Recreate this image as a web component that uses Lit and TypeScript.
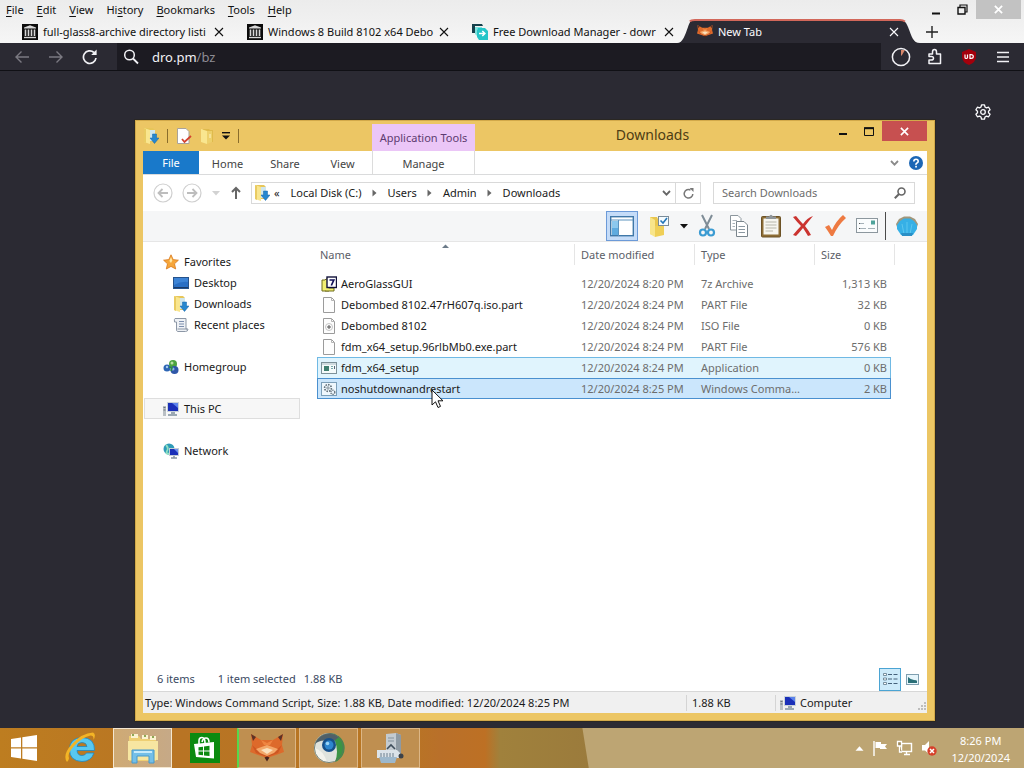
import { LitElement, html, svg, css, nothing, TemplateResult } from "lit";
import { customElement } from "lit/decorators.js";
import { classMap } from "lit/directives/class-map.js";

const base = css`
  * {
    box-sizing: border-box;
  }
  :host {
    font-family: "Noto Sans", "Open Sans", sans-serif;
    font-size: 11px;
    line-height: 16px;
  }
  button,
  input {
    font: inherit;
    color: inherit;
    background: none;
    border: 0;
    margin: 0;
    padding: 0;
  }
  button {
    display: flex;
    align-items: center;
    white-space: nowrap;
  }
  a {
    color: inherit;
    text-decoration: none;
  }
  svg {
    display: block;
    flex: none;
  }
`;

/** Wraps vector content in a square or rectangular icon. */
const icon = (w: number, h: number, box: string, body: TemplateResult) =>
  html`<svg width=${w} height=${h} viewBox=${box} aria-hidden="true">${body}</svg>`;

const cross = (size: number, width = 1) =>
  icon(size, size, "0 0 10 10", svg`<path d="M1 1L9 9M9 1L1 9" stroke="currentColor" stroke-width=${width} fill="none"/>`);

const archiveIcon = () =>
  icon(16, 16, "0 0 16 16", svg`
    <rect width="16" height="16" fill="#0c0c0c"/>
    <path d="M2 3.6L8 1.2L14 3.6V4.6H2Z" fill="#d8d8d8"/>
    <path d="M3.5 5.5V12M6.5 5.5V12M9.5 5.5V12M12.5 5.5V12" stroke="#d8d8d8" stroke-width="1.6"/>
    <path d="M2 13.5H14" stroke="#d8d8d8" stroke-width="1.4"/>`);

const fdmIcon = () =>
  icon(16, 16, "0 0 16 16", svg`
    <path d="M0 9V0H10L11 2H3V9Z" fill="#16414c"/>
    <path d="M3 3H10V5H5V12L3 10Z" fill="#7fe3df"/>
    <path d="M6 4H13L16 7V16H7L5 13V6Z" fill="#25c5c8"/>
    <path d="M7 9.500H12.500M10.300 7L12.900 9.500L10.300 12" stroke="#fff" stroke-width="1.500" fill="none"/>`);

const foxIcon = (w: number, h: number) =>
  icon(w, h, "0 0 34 28", svg`
    <path d="M1 0L11 6L23 6L33 0L32 11L34 18L26 21L17 24L8 21L0 18L2 11Z" fill="#dd6a2b"/>
    <path d="M1 0L6 3L3 7ZM33 0L28 3L31 7Z" fill="#5d3226"/>
    <path d="M11 6L17 9L23 6L20 11H14Z" fill="#ef8440"/>
    <path d="M2 11L9 17L17 13L25 17L32 11L28 19L17 23L6 19Z" fill="#cd5722"/>
    <path d="M6 15L17 11L28 15L24 19L17 22L10 19Z" fill="#f3a768"/>
    <path d="M11 16L17 14L23 16L17 20Z" fill="#fbe0bd"/>
    <path d="M14.500 23.500L17 22.500L19.500 23.500L17 27.500Z" fill="#4a231c"/>`);

const folderDown = () =>
  icon(16, 16, "0 0 16 16", svg`
    <path d="M2 0H10L12 2V14H2Z" fill="#e7c65a"/>
    <path d="M7 2H12V13H7Z" fill="#cfe6ee"/>
    <path d="M1 0L7 2V16L1 14Z" fill="#f9e68f"/>
    <path d="M1 0L3 1V15L1 14Z" fill="#e9cb62"/>
    <path d="M9.500 6H13.500V10H16L11.500 15.500L7 10H9.500Z" fill="#2787cf" stroke="#1465a9" stroke-width=".5"/>`);

const folderPlain = () =>
  icon(14, 16, "0 0 14 16", svg`
    <path d="M3 1H9L10 2H13V14H3Z" fill="#dfba4c"/>
    <path d="M1 1L7 3V16L1 14Z" fill="#f9e68f"/>
    <path d="M7 3H12V14L7 16Z" fill="#edd06b"/>
    <path d="M10 6V10" stroke="#fff4c4"/>`);

const pcIcon = () =>
  icon(16, 16, "0 0 16 16", svg`
    <path d="M0 5H3V15H0Z" fill="#b9bfc4"/>
    <path d="M.5 6.500H2.500M.5 9H2.500" stroke="#6c747a"/>
    <path d="M4 1H16V11H4Z" fill="#c9d2da"/>
    <path d="M5 2H15V10H5Z" fill="#1a2fb8"/>
    <path d="M9 2H15V7Z" fill="#5c83ec"/>
    <path d="M8 11H12V13H14V15H5V13H8Z" fill="#9ba8b3"/>`);

const chevronDown = (color: string) =>
  icon(9, 6, "0 0 9 6", svg`<path d="M1 1L4.5 4.6L8 1" stroke=${color} stroke-width="1.8" fill="none"/>`);

const arrowCircle = (flip: boolean) =>
  icon(20, 20, "0 0 20 20", svg`
    <circle cx="10" cy="10" r="9" fill="none" stroke="#cfcfcf" stroke-width="1.2"/>
    <path d=${flip ? "M5 10H14M10.5 6L14.5 10L10.5 14" : "M15 10H6M9.5 6L5.5 10L9.5 14"}
      stroke="#bdbdbd" stroke-width="1.8" fill="none"/>`);

@customElement("browser-chrome")
export class BrowserChrome extends LitElement {
  static styles = [
    base,
    css`
      :host {
        display: block;
        color: #111;
        background: linear-gradient(#ececec, #f0f0f0 20px, #f6f6f6 43px);
      }
      .menubar {
        display: flex;
        height: 20px;
      }
      .menubar button {
        padding: 0 7px 0 6px;
      }
      .menubar u {
        text-underline-offset: 2px;
      }
      .controls {
        display: flex;
        margin-left: auto;
        align-items: flex-start;
      }
      .controls button {
        justify-content: center;
        width: 26px;
        height: 19px;
        padding: 0;
      }
      .controls .close {
        width: 45px;
        margin: 0 3px 0 1px;
        background: #c2c2c2;
        color: #fff;
      }
      .tabs {
        display: flex;
        height: 23px;
      }
      .tab {
        position: relative;
        flex: 0 1 225px;
        min-width: 0;
        display: flex;
        align-items: center;
        padding-left: 22px;
      }
      .tab .label {
        flex: 1;
        padding-left: 5px;
        overflow: hidden;
        white-space: nowrap;
      }
      .tab > * {
        position: relative;
      }
      .tab .shape {
        position: absolute;
        left: 2px;
        bottom: 0;
        width: calc(100% + 18px);
        height: 24px;
      }
      .active {
        color: #fbfbfe;
      }
      .tab .x {
        width: 12px;
        justify-content: center;
      }
      .plus {
        width: 64px;
        justify-content: center;
      }
      .toolbar {
        display: flex;
        align-items: stretch;
        height: 28px;
        background: #2b2a33;
        color: #f2f2f6;
        border-bottom: 1px solid #101015;
      }
      .toolbar button {
        width: 34px;
        justify-content: center;
      }
      .toolbar .first {
        margin-left: 5px;
      }
      .toolbar .dim {
        color: #7b7a82;
      }
      .urlbar {
        flex: 1;
        min-width: 0;
        margin: 0 3px 0 10px;
        padding-left: 6px;
        display: flex;
        align-items: center;
        gap: 13px;
        background: #1c1b22;
        font-size: 13px;
      }
      .urlbar .path {
        color: #8d8c94;
      }
      .end {
        margin-right: 4px;
      }
    `,
  ];

  private menu = ["File", "Edit", "View", "Hi|story", "Bookmarks", "Tools", "Help"];

  private tabs = [
    { icon: archiveIcon(), label: "full-glass8-archive directory listi" },
    { icon: archiveIcon(), label: "Windows 8 Build 8102 x64 Debo" },
    { icon: fdmIcon(), label: "Free Download Manager - dowr" },
    { icon: foxIcon(16, 15), label: "New Tab", active: true },
  ];

  private menuLabel(text: string) {
    const at = Math.max(text.indexOf("|"), 0);
    const plain = text.replace("|", "");
    return html`<span>${plain.slice(0, at)}<u>${plain[at]}</u>${plain.slice(at + 1)}</span>`;
  }

  render() {
    return html`
      <div class="menubar">
        ${this.menu.map((m) => html`<button>${this.menuLabel(m)}</button>`)}
        <div class="controls">
          <button aria-label="Minimize">
            ${icon(10, 12, "0 0 10 12", svg`<path d="M1 9.5H9" stroke="#111" stroke-width="2"/>`)}
          </button>
          <button aria-label="Restore">
            ${icon(11, 11, "0 0 11 11", svg`
              <path d="M1 3.5H8V10H1Z" fill="none" stroke="#111" stroke-width="1.4"/>
              <path d="M3 3V1H10V8H8" fill="none" stroke="#111" stroke-width="1.2"/>`)}
          </button>
          <button class="close" aria-label="Close">${cross(9, 2)}</button>
        </div>
      </div>
      <div class="tabs" role="tablist">
        ${this.tabs.map(
          (t) => html`
            <div class=${classMap({ tab: true, active: !!t.active })} role="tab">
              ${t.active
                ? html`<svg class="shape" viewBox="0 0 243 24" preserveAspectRatio="none" aria-hidden="true">
                    <path d="M0 24C6 24 8 16 11 8C13 2 14 1 18 1H223C227 1 229 3 231 8C235 18 236 24 243 24Z" fill="#2b2a33" />
                    <path d="M13 2.5Q14 1 18 1H223Q226 1 228 2.5" stroke="#d2675a" stroke-width="2" fill="none" />
                  </svg>`
                : nothing}
              ${t.icon}<span class="label">${t.label}</span>
              <button class="x" aria-label="Close tab">${cross(10, 1.1)}</button>
            </div>
          `
        )}
        <button class="plus" aria-label="New tab">
          ${icon(12, 12, "0 0 12 12", svg`<path d="M6 0V12M0 6H12" stroke="#222" stroke-width="1.4"/>`)}
        </button>
      </div>
      <div class="toolbar">
        <button class="first dim" aria-label="Back">
          ${icon(16, 14, "0 0 16 14", svg`<path d="M15 7H2M7.5 1.5L2 7L7.5 12.5" stroke="currentColor" stroke-width="1.4" fill="none"/>`)}
        </button>
        <button class="dim" aria-label="Forward">
          ${icon(16, 14, "0 0 16 14", svg`<path d="M1 7H14M8.5 1.5L14 7L8.5 12.5" stroke="currentColor" stroke-width="1.4" fill="none"/>`)}
        </button>
        <button aria-label="Reload">
          ${icon(16, 16, "0 0 16 16", svg`
            <path d="M14 9A6.3 6.3 0 1 1 12 3.5" stroke="currentColor" stroke-width="1.7" fill="none"/>
            <path d="M14.6 0.6V6H9.2Z" fill="currentColor"/>`)}
        </button>
        <div class="urlbar">
          ${icon(16, 16, "0 0 16 16", svg`
            <circle cx="6.5" cy="6" r="4.8" stroke="currentColor" stroke-width="1.5" fill="none"/>
            <path d="M10 9.5L15 14.5" stroke="currentColor" stroke-width="1.8"/>`)}
          <span>dro.pm<span class="path">/bz</span></span>
        </div>
        <button aria-label="Profile">
          ${icon(20, 20, "0 0 20 20", svg`
            <circle cx="10" cy="10" r="8.6" stroke="currentColor" stroke-width="1.5" fill="none"/>
            <path d="M10 9V3H14L11 8Z" fill="#d8876c"/>`)}
        </button>
        <button aria-label="Extensions">
          ${icon(16, 17, "0 0 16 17", svg`<path
            d="M2 6H5.5V4Q5.5 1.5 7.5 1.5T9.5 4V6H13.5V15.5H2V12H4Q6.5 12 6.5 10.2T4 8.6H2Z"
            stroke="currentColor" stroke-width="1.5" stroke-linejoin="round" fill="none"/>`)}
        </button>
        <button aria-label="uBlock">
          ${icon(16, 16, "0 0 16 16", svg`
            <path d="M8 0L15 3V8Q15 13 8 16Q1 13 1 8V3Z" fill="#a3000c"/>
            <path d="M4 5.5V8.5Q4 9.5 5.2 9.5T6.5 8.5V5.5M9 5.6V9.4H10Q12.3 9.4 12.3 7.5T10 5.6Z" stroke="#fff" stroke-width="1.2" fill="none"/>`)}
        </button>
        <button class="end" aria-label="Menu">
          ${icon(14, 12, "0 0 14 12", svg`<path d="M1 1.5H13M1 6H13M1 10.5H13" stroke="currentColor" stroke-width="1.5"/>`)}
        </button>
      </div>
    `;
  }
}

interface FileRow {
  icon: TemplateResult;
  name: string;
  date: string;
  type: string;
  size: string;
  state?: string;
}

const pageIcon = (body: TemplateResult = svg``) =>
  icon(16, 16, "0 0 16 16", svg`
    <path d="M2.5 0.5H10.5L13.5 3.5V15.5H2.5Z" fill="#fdfdfd" stroke="#9b9b9b"/>
    <path d="M10.5 0.5V3.5H13.5" fill="none" stroke="#b5b5b5"/>${body}`);

@customElement("file-window")
export class FileWindow extends LitElement {
  static styles = [
    base,
    css`
      :host {
        display: flex;
        flex-direction: column;
        padding: 0 7px 7px;
        border: 1px solid #d2a94a;
        background: #ecc664;
        color: #1a1a1a;
        box-shadow: 0 0 0 1px #2a2723;
      }
      .titlebar {
        flex: none;
        display: flex;
        height: 30px;
      }
      .quick {
        width: 229px;
        display: flex;
        align-items: center;
        gap: 8px;
      }
      .quick .bar {
        width: 1px;
        height: 14px;
        background: #8a6d2c;
      }
      .tools {
        width: 103px;
        margin-top: 3px;
        background: #ebc6f7;
        color: #5d3b70;
        display: flex;
        align-items: center;
        justify-content: center;
        white-space: nowrap;
      }
      .title {
        flex: 1;
        font-size: 14px;
        line-height: 20px;
        padding-top: 4px;
        text-align: center;
        color: #4e3d14;
      }
      .titlebar button {
        width: 26px;
        height: 20px;
        justify-content: center;
      }
      .titlebar .close {
        width: 45px;
        background: #c75050;
        color: #fff;
      }
      .client {
        flex: 1;
        min-height: 0;
        display: flex;
        flex-direction: column;
        background: #fff;
      }
      .ribbon {
        display: flex;
        height: 24px;
        border-bottom: 1px solid #dadbdc;
        color: #444;
      }
      .ribbon button {
        width: 57px;
        justify-content: center;
        padding-top: 2px;
      }
      .ribbon .file {
        width: 56px;
        padding: 0;
        background: #1979ca;
        color: #fff;
      }
      .ribbon .share {
        width: 58px;
      }
      .ribbon .manage {
        width: 103px;
        margin-left: 1px;
        border: solid #dcdcdc;
        border-width: 0 1px;
      }
      .ribbon .help {
        margin-left: auto;
        display: flex;
        align-items: center;
        gap: 10px;
        padding-right: 4px;
      }
      .navrow {
        display: flex;
        align-items: center;
        height: 36px;
        padding: 0 12px 0 10px;
      }
      .navrow > button {
        margin-right: 9px;
      }
      .address {
        flex: 1;
        min-width: 0;
        display: flex;
        height: 22px;
        align-items: stretch;
        border: 1px solid #d9d9d9;
      }
      .crumbs {
        flex: 1;
        display: flex;
        align-items: center;
        padding-left: 2px;
        gap: 4px;
      }
      .crumbs .step {
        display: flex;
        align-items: center;
        gap: 10px;
        margin-left: 7px;
      }
      .address > button {
        padding: 0 4px;
      }
      .address .refresh {
        width: 25px;
        padding: 0 7px;
        border-left: 1px solid #d9d9d9;
      }
      .search {
        width: 202px;
        height: 22px;
        margin-left: 12px;
        display: flex;
        align-items: center;
        border: 1px solid #d9d9d9;
        padding: 0 8px;
      }
      .search input {
        flex: 1;
        min-width: 0;
        outline: 0;
      }
      .search input::placeholder {
        color: #6d6d6d;
        opacity: 1;
      }
      .commands {
        display: flex;
        align-items: center;
        justify-content: flex-end;
        height: 31px;
        padding-right: 4px;
        background: #f5f6f7;
        border-bottom: 1px solid #e6e6e6;
      }
      .commands button {
        width: 32px;
        height: 30px;
        justify-content: center;
      }
      .commands .on {
        background: #c5dcf8;
        border: 1px solid #6c9ad8;
        margin-right: 5px;
      }
      .commands .views {
        gap: 10px;
        width: 50px;
        margin-right: -2px;
      }
      .commands .rule {
        width: 1px;
        height: 28px;
        background: #4a4a4a;
        margin: 0 5px 0 2px;
      }
      .main {
        flex: 1;
        min-height: 0;
        display: flex;
      }
      .side {
        width: 157px;
        flex: none;
        padding-top: 9px;
        padding-left: 1px;
      }
      .side a {
        display: flex;
        align-items: center;
        gap: 5px;
        height: 21px;
        padding-left: 19px;
      }
      .side .sub {
        padding-left: 29px;
      }
      .side .group {
        margin-top: 21px;
      }
      .side .here {
        background: #f7f7f7;
        border: 1px solid #dedede;
        padding-left: 18px;
      }
      .list {
        flex: 1;
        padding: 2px 32px 0 17px;
      }
      table {
        border-collapse: separate;
        border-spacing: 0;
        width: 100%;
        max-width: 578px;
        table-layout: fixed;
      }
      .c-date,
      .c-type {
        width: 120px;
      }
      .c-size {
        width: 76px;
      }
      .c-end {
        width: 4px;
      }
      th {
        position: relative;
        height: 21px;
        padding: 0 6px;
        font-weight: 400;
        text-align: left;
        color: #5c6068;
        border-right: 1px solid #e5e5e5;
      }
      th:first-child {
        padding-left: 3px;
      }
      th.size {
        border-right: 0;
      }
      th.end {
        padding: 0;
      }
      .sort {
        position: absolute;
        left: 50%;
        top: 0;
        margin-left: -4px;
      }
      .spacer td {
        height: 8px;
        padding: 0;
      }
      .rows td {
        height: 21px;
        padding: 0 10px 0 6px;
        color: #6d6d6d;
        white-space: nowrap;
        overflow: hidden;
        text-overflow: ellipsis;
        border: solid transparent;
        border-width: 1px 0;
      }
      .rows td:first-child {
        padding-left: 3px;
        border-left-width: 1px;
        color: #1a1a1a;
      }
      .rows td:last-child {
        padding-right: 3px;
        text-align: right;
        border-right-width: 1px;
      }
      .name {
        display: flex;
        align-items: center;
        gap: 4px;
      }
      .rows .hover td {
        background: #e0f4fd;
        border-color: #70b9e4;
        border-bottom-width: 0;
      }
      .rows .picked td {
        background: #cbe6fc;
        border-color: #4a90cf;
      }
      .status {
        display: flex;
        align-items: center;
        height: 24px;
        padding: 0 4px 0 14px;
        color: #3b4a63;
      }
      .status span {
        margin-right: 8px;
      }
      .status .count {
        margin-right: 23px;
      }
      .status button {
        width: 22px;
        height: 23px;
        justify-content: center;
      }
      .status .details {
        margin-left: auto;
        background: #cdeafa;
        border: 1px solid #4ba4d3;
      }
      .infobar {
        display: flex;
        align-items: center;
        height: 22px;
        background: #f0f0f0;
        border-top: 1px solid #d7d7d7;
        padding-left: 2px;
      }
      .infobar .size {
        width: 89px;
        padding-left: 5px;
        border-left: 1px solid #d4d4d4;
      }
      .infobar .place {
        width: 152px;
        display: flex;
        gap: 4px;
        padding-left: 4px;
        border-left: 1px solid #d4d4d4;
      }
      .infobar .info {
        flex: 1;
        white-space: nowrap;
      }
      .infobar .place svg:last-child {
        margin-left: auto;
        align-self: flex-end;
      }
    `,
  ];

  private rows: FileRow[] = [
    {
      icon: icon(16, 16, "0 0 16 16", svg`
        <path d="M1 4H4L5 3H8V15H1Z" fill="#f2ef72" stroke="#6f6c1a"/>
        <path d="M8 12H13V15H4" fill="#f2ef72" stroke="#6f6c1a"/>
        <rect x="6" y="1" width="9.5" height="10.5" fill="#fff" stroke="#12123a" stroke-width="1.4"/>
        <path d="M8.5 4H12.8L10.3 9.5" stroke="#12125a" stroke-width="1.7" fill="none"/>`),
      name: "AeroGlassGUI", date: "12/20/2024 8:20 PM", type: "7z Archive", size: "1,313 KB",
    },
    { icon: pageIcon(), name: "Debombed 8102.47rH607q.iso.part", date: "12/20/2024 8:24 PM", type: "PART File", size: "32 KB" },
    {
      icon: pageIcon(svg`<circle cx="8" cy="9" r="3.5" fill="none" stroke="#c5c5c5"/><path d="M8 7V11M6 9H10" stroke="#555"/>`),
      name: "Debombed 8102", date: "12/20/2024 8:24 PM", type: "ISO File", size: "0 KB",
    },
    { icon: pageIcon(), name: "fdm_x64_setup.96rlbMb0.exe.part", date: "12/20/2024 8:24 PM", type: "PART File", size: "576 KB" },
    {
      icon: icon(16, 16, "0 0 16 16", svg`
        <rect x=".5" y="2.5" width="15" height="11" fill="#f4fafa" stroke="#7c9199"/>
        <path d="M1 4H15" stroke="#a9bcc4"/><rect x="3" y="6" width="5" height="5" fill="#3f7f70"/>
        <path d="M10 6.5H12M10 8.5H12" stroke="#7aa"/><path d="M13.5 6V9" stroke="#567"/>`),
      name: "fdm_x64_setup", date: "12/20/2024 8:24 PM", type: "Application", size: "0 KB", state: "hover",
    },
    {
      icon: icon(16, 16, "0 0 16 16", svg`
        <rect x=".5" y="1.5" width="15" height="13" fill="#eef7fd" stroke="#7c9fb9"/>
        <circle cx="7" cy="7" r="3.4" fill="none" stroke="#66747e" stroke-width="1.6" stroke-dasharray="1.6 1"/>
        <circle cx="7" cy="7" r="1.2" fill="none" stroke="#66747e" stroke-width=".8"/>
        <circle cx="11.8" cy="11.3" r="2" fill="none" stroke="#66747e" stroke-width="1.4" stroke-dasharray="1.2 .8"/>`),
      name: "noshutdownandrestart", date: "12/20/2024 8:25 PM", type: "Windows Command Script", size: "2 KB", state: "picked",
    },
  ];

  private star = icon(16, 16, "0 0 16 16", svg`
    <path d="M8 .8L10.2 5.6L15.4 6.2L11.5 9.8L12.7 15L8 12.4L3.3 15L4.5 9.8L.6 6.2L5.8 5.6Z" fill="#f6a63a" stroke="#d97a1d" stroke-width=".8"/>
    <path d="M8 3L9.3 6.6L8 9L6.4 7Z" fill="#ffe7a6"/>`);

  private desk = icon(16, 16, "0 0 16 16", svg`
    <rect x=".5" y="2.5" width="15" height="11" fill="#2a6fc4" stroke="#25528c"/>
    <path d="M1 3H15V7Q8 6 1 10Z" fill="#3d84d6"/><path d="M1 12.5H15" stroke="#1b3a66"/>`);

  private recent = icon(16, 16, "0 0 16 16", svg`
    <path d="M2 1.5H13V12H15Q15 14.5 12.5 14.5H4.500Q3.500 14.5 3.500 12V5H1.5Q1 2 2 1.5Z" fill="#eef1f5" stroke="#8c97a6"/>
    <path d="M6 4.500H11M6 7H11M6 9.500H11" stroke="#7d8fae"/><path d="M4.500 12H14" stroke="#8c97a6"/>`);

  private home = icon(16, 16, "0 0 16 16", svg`
    <circle cx="10" cy="5" r="4" fill="#4da33f"/><circle cx="4" cy="9" r="3.500" fill="#2e66b5"/>
    <circle cx="11.500" cy="11" r="4" fill="#2f57a8"/><circle cx="9" cy="4" r="1.500" fill="#b8e0a4"/>
    <circle cx="4" cy="8" r="1.200" fill="#a9cbf0"/><circle cx="10" cy="10" r="1.500" fill="#8fb6ea"/>
    <path d="M6 8L9 9L8 12" stroke="#2b8a4a" stroke-width="1.600" fill="none"/>`);

  private net = icon(16, 16, "0 0 16 16", svg`
    <circle cx="6" cy="6" r="5.500" fill="#2f9bb8"/><path d="M3 2Q6 5 4 8T7 11" stroke="#8fe0c2" stroke-width="1.800" fill="none"/>
    <rect x="6.500" y="5.500" width="9" height="7" fill="#1a2fb8" stroke="#c2ccd6"/>
    <path d="M11 6H15V10Z" fill="#6c90ef"/><path d="M8 15H14M11 13V15" stroke="#8794a0" stroke-width="1.500"/>`);

  private commands() {
    return html`
      <div class="commands">
        <button class="on" aria-label="Navigation pane">
          ${icon(24, 24, "0 0 24 24", svg`
            <rect x=".7" y="2.700" width="22.600" height="19" fill="#fff" stroke="#4078a8" stroke-width="1.400"/>
            <path d="M1 6H23M8.500 6V22" stroke="#5c93be"/><path d="M2 7H8V21H2Z" fill="#8cc8ee"/>
            <path d="M2 14H8V21H2Z" fill="#5fabdf"/>`)}
        </button>
        <button class="views" aria-label="Select">
          ${icon(22, 24, "0 0 22 24", svg`
            <path d="M2 3H9L10 5V22L2 20Z" fill="#e9c64f"/><path d="M2 3L7 6V23L2 20Z" fill="#f8e58a"/>
            <path d="M7 12L16 10V21L7 23Z" fill="#efcf57"/>
            <rect x="10.500" y="2.500" width="10" height="9" fill="#f4fbff" stroke="#7a8c99"/>
            <path d="M12.500 6.500L15 9L19 4" stroke="#2376b8" stroke-width="1.600" fill="none"/>`)}
          ${icon(8, 5, "0 0 8 5", svg`<path d="M0 0H8L4 4.500Z" fill="#111"/>`)}
        </button>
        <button aria-label="Cut">
          ${icon(18, 24, "0 0 18 24", svg`
            <path d="M4 1L11 15M14 1L7 15" stroke="#7e8c96" stroke-width="2"/>
            <circle cx="5" cy="18.500" r="3" fill="none" stroke="#3a9bd2" stroke-width="2.200"/>
            <circle cx="13" cy="18.500" r="3" fill="none" stroke="#3a9bd2" stroke-width="2.200"/>`)}
        </button>
        <button aria-label="Copy">
          ${icon(20, 24, "0 0 20 24", svg`
            <path d="M1.500 1.500H9L12 4.500V16H1.500Z" fill="#fff" stroke="#8d979e"/>
            <path d="M3.500 6.500H8M3.500 9.500H6M3.500 12.500H6" stroke="#a9b2b8"/>
            <path d="M7.500 7.500H15L18.500 11V22.500H7.500Z" fill="#fff" stroke="#7a858c"/>
            <path d="M9.500 12.500H16M9.500 15.500H16M9.500 18.500H16" stroke="#8b98a1"/>`)}
        </button>
        <button aria-label="Paste">
          ${icon(22, 24, "0 0 22 24", svg`
            <rect x="1.500" y="2.500" width="19" height="20.500" rx="1" fill="#8d6d34" stroke="#6c5226"/>
            <rect x="3.500" y="4.500" width="15" height="16" fill="#f7f6ef"/>
            <path d="M5.500 8H16.500M5.500 11H16.500M5.500 14H16.500M5.500 17H13" stroke="#b7b6aa"/>
            <path d="M6 5V2.500H9Q11 -1 13 2.500H16V5Z" fill="#8f9599"/>`)}
        </button>
        <button aria-label="Delete">
          ${icon(22, 22, "0 0 22 22", svg`<path d="M1 2L4 1Q8 6 11 9Q15 3 21 1Q16 7 13 11Q17 16 19 20L16 21Q13 16 11 13Q7 18 4 21L1 20Q5 15 9 11Q5 7 1 2Z" fill="#cb3430"/>`)}
        </button>
        <button aria-label="Rename">
          ${icon(22, 24, "0 0 22 24", svg`<path d="M1 13L5 11L8 16Q12 7 19 1L22 4Q14 11 9 22H7Q4 17 1 13Z" fill="#ee7a42"/>`)}
        </button>
        <button aria-label="Properties">
          ${icon(22, 16, "0 0 22 16", svg`
            <rect x=".5" y=".5" width="21" height="14" fill="#fafcfd" stroke="#8c979e"/>
            <path d="M3 5.500H8M3 10.500H10M12 10.500H19" stroke="#a5b1b8"/><path d="M3 5.500H4M3 10.500H4" stroke="#555"/>
            <rect x="15" y="2.500" width="4" height="4" fill="#4fa39b"/>`)}
        </button>
        <span class="rule"></span>
        <button aria-label="Classic Shell">
          ${icon(24, 22, "0 0 24 22", svg`
            <path d="M1 9L4 4L9 1.500H15L20 4L23 9L22 12H2Z" fill="#a1977c"/>
            <path d="M6 20L2 14V10L5 6L9 3.500H15L19 6L22 10V14L18 20Z" fill="#36b0e6"/>
            <path d="M9 19L7 9M15 19L17 9M12 18V7" stroke="#5cc6ee"/>
            <path d="M6 18H18L17 21H7Z" fill="#2a8fc6"/>`)}
        </button>
      </div>
    `;
  }

  private crumb(name: string, last = false) {
    return html`<span class="step"
      ><a href="#">${name}</a>${last
        ? nothing
        : icon(5, 8, "0 0 5 8", svg`<path d="M0.500 0.500L4.500 4L0.500 7.500Z" fill="#666"/>`)}</span
    >`;
  }

  render() {
    return html`
      <div class="titlebar">
        <div class="quick">
          ${folderDown()}<span class="bar"></span>
          ${icon(16, 16, "0 0 16 16", svg`
            <path d="M1.500 .5H10L13 3.500V15.500H1.500Z" fill="#fff" stroke="#a9a39a"/>
            <path d="M6 11L8.500 14L15 8" stroke="#d3432f" stroke-width="1.800" fill="none"/>`)}
          ${folderPlain()}
          ${icon(8, 8, "0 0 8 8", svg`<path d="M0 .7H8" stroke="#111" stroke-width="1.400"/><path d="M0 3.500H8L4 7.500Z" fill="#111"/>`)}
          <span class="bar"></span>
        </div>
        <div class="tools">Application Tools</div>
        <div class="title">Downloads</div>
        <button aria-label="Minimize">
          ${icon(10, 12, "0 0 10 12", svg`<path d="M1 9H9" stroke="#111" stroke-width="2"/>`)}
        </button>
        <button aria-label="Maximize">
          ${icon(10, 9, "0 0 10 9", svg`<path d="M.5 1H9.500V8.500H.5Z" fill="none" stroke="#111"/><path d="M0 1.200H10" stroke="#111" stroke-width="2"/>`)}
        </button>
        <button class="close" aria-label="Close">${cross(9, 1.8)}</button>
      </div>
      <div class="client">
        <div class="ribbon">
          <button class="file">File</button>
          <button>Home</button>
          <button class="share">Share</button>
          <button>View</button>
          <button class="manage">Manage</button>
          <div class="help">
            ${chevronDown("#8a8a8a")}
            ${icon(14, 14, "0 0 14 14", svg`
              <circle cx="7" cy="7" r="7" fill="#1b66b5"/>
              <path d="M4.800 5.500Q4.800 3.200 7 3.200T9.200 5.300Q9.200 6.500 8 7T7 8.800" stroke="#fff" stroke-width="1.600" fill="none"/>
              <rect x="6.200" y="9.800" width="1.700" height="1.700" fill="#fff"/>`)}
          </div>
        </div>
        <div class="navrow">
          <button aria-label="Back">${arrowCircle(false)}</button>
          <button aria-label="Forward">${arrowCircle(true)}</button>
          <button aria-label="Recent locations">
            ${icon(10, 5, "0 0 10 5", svg`<path d="M1 0H9L5 4.500Z" fill="#d2d2d2"/>`)}
          </button>
          <button aria-label="Up">
            ${icon(12, 14, "0 0 12 14", svg`<path d="M6 13V2M2 6L6 2L10 6" stroke="#666" stroke-width="2" fill="none"/>`)}
          </button>
          <div class="address">
            <div class="crumbs">
              ${folderDown()}<span>«</span> ${this.crumb("Local Disk (C:)")}${this.crumb("Users")}
              ${this.crumb("Admin")}${this.crumb("Downloads", true)}
            </div>
            <button aria-label="History">${chevronDown("#666")}</button>
            <button class="refresh" aria-label="Refresh">
              ${icon(11, 11, "0 0 11 11", svg`
                <path d="M9.800 6A4.300 4.300 0 1 1 7.500 2" stroke="#777" stroke-width="1.500" fill="none"/>
                <path d="M6.500 0H10.500V4Z" fill="#777"/>`)}
            </button>
          </div>
          <label class="search">
            <input type="text" placeholder="Search Downloads" aria-label="Search Downloads" />
            ${icon(12, 12, "0 0 12 12", svg`
              <circle cx="7.500" cy="4.500" r="3.500" stroke="#666" stroke-width="1.600" fill="none"/>
              <path d="M5 7L.8 11.200" stroke="#666" stroke-width="2"/>`)}
          </label>
        </div>
        ${this.commands()}
        <div class="main">
          <nav class="side">
            <a href="#">${this.star}Favorites</a>
            <a class="sub" href="#">${this.desk}Desktop</a>
            <a class="sub" href="#">${folderDown()}Downloads</a>
            <a class="sub" href="#">${this.recent}Recent places</a>
            <a class="group" href="#">${this.home}Homegroup</a>
            <a class="group here" href="#">${pcIcon()}This PC</a>
            <a class="group" href="#">${this.net}Network</a>
          </nav>
          <div class="list">
            <table>
              <colgroup>
                <col />
                <col class="c-date" />
                <col class="c-type" />
                <col class="c-size" />
                <col class="c-end" />
              </colgroup>
              <thead>
                <tr>
                  <th>
                    Name
                    <svg class="sort" width="7" height="4" viewBox="0 0 7 4" aria-hidden="true">
                      <path d="M0 4L3.500 .500L7 4Z" fill="#6b7a88" />
                    </svg>
                  </th>
                  <th>Date modified</th>
                  <th>Type</th>
                  <th class="size">Size</th>
                  <th class="end"></th>
                </tr>
                <tr class="spacer"><td colspan="5"></td></tr>
              </thead>
              <tbody class="rows">
                ${this.rows.map(
                  (r) => html`<tr class=${r.state ?? ""}>
                    <td><div class="name">${r.icon}${r.name}</div></td>
                    <td>${r.date}</td>
                    <td>${r.type}</td>
                    <td>${r.size}</td>
                  </tr>`
                )}
              </tbody>
            </table>
          </div>
        </div>
        <div class="status">
          <span class="count">6 items</span><span>1 item selected</span><span>1.88 KB</span>
          <button class="details" aria-label="Details view">
            ${icon(16, 14, "0 0 16 14", svg`
              <path d="M1.500 1.500H4.500V3.500H1.500ZM1.500 6H4.500V8H1.500ZM1.500 10.500H4.500V12.500H1.500Z" fill="#fff" stroke="#5d7688" stroke-width=".8"/>
              <path d="M6 2.500H10M11.500 2.500H15.500M6 7H10M11.500 7H15.500M6 11.500H10M11.500 11.500H15.500" stroke="#44607a"/>`)}
          </button>
          <button aria-label="Thumbnail view">
            ${icon(13, 11, "0 0 13 11", svg`
              <rect x=".5" y=".5" width="12" height="10" fill="#e6f5fb" stroke="#7f9fb0"/>
              <path d="M2 3Q5 6 8 6T11 7V9H2Z" fill="#2a6f77"/>`)}
          </button>
        </div>
        <div class="infobar">
          <span class="info">Type: Windows Command Script, Size: 1.88 KB, Date modified: 12/20/2024 8:25 PM</span>
          <span class="size">1.88 KB</span>
          <span class="place">
            ${pcIcon()}Computer
            ${icon(10, 10, "0 0 10 10", svg`<path d="M7 1H9V3H7ZM7 4H9V6H7ZM7 7H9V9H7ZM4 4H6V6H4ZM4 7H6V9H4ZM1 7H3V9H1Z" fill="#bdbdbd"/>`)}
          </span>
        </div>
      </div>
    `;
  }
}

@customElement("task-bar")
export class TaskBar extends LitElement {
  static styles = [
    base,
    css`
      :host {
        display: flex;
        height: 40px;
        color: #fff;
        background:
          linear-gradient(81deg, transparent 581px, #bda573 582px),
          linear-gradient(90deg, #bd7d20, #b87424 180px, #b87622 400px, #b9702a 440px, #bd7024 485px, #a0813c 500px, #9b7b3c 590px);
      }
      .apps {
        display: flex;
        gap: 3px;
      }
      .apps button {
        width: 59px;
        justify-content: center;
        border: 1px solid transparent;
      }
      .apps .start {
        width: 48px;
      }
      .apps .open {
        background: #bf8f50;
        border-color: #dcb686;
      }
      .apps .front {
        background: linear-gradient(90deg, #cfaa74, #c6a987);
        border-color: #f4e6cf;
      }
      .apps .busy {
        border-left: 2px solid #57d84c;
      }
      .tray {
        margin-left: auto;
        display: flex;
        align-items: center;
        padding-right: 14px;
      }
      .tray > svg {
        margin-right: 8px;
      }
      .clock {
        margin-left: 6px;
        line-height: 17px;
        text-align: center;
        padding-top: 2px;
      }
    `,
  ];

  render() {
    return html`
      <div class="apps">
        <button class="start" aria-label="Start">
          ${icon(28, 26, "0 0 28 26", svg`<path d="M1 4L11 2.500V12.300H1ZM12.300 2.300L27 0V12.300H12.300ZM1 13.600H11V23.500L1 22ZM12.300 13.600H27V26L12.300 23.700Z" fill="#fff"/>`)}
        </button>
        <button aria-label="Internet Explorer">
          ${icon(32, 32, "0 0 32 32", svg`
            <path d="M29.500 18.500H12Q12.500 23.500 17 23.500Q20 23.500 21.500 21H29Q26 29.500 17 29.500Q4.500 29 4.500 17.500T17 5.500Q30 6 29.500 18.500ZM12 14.500H22Q21.500 10.500 17 10.500T12 14.500Z"
              fill="#58c8f0" stroke="#1f86bf" stroke-width=".8" fill-rule="evenodd"/>
            <path d="M2 30Q-3 23 7 12T28 .5Q31.500 2 28.500 8Q29 3.500 25.500 3.500Q16 6 9 14T4 26Q4 28 2 30Z" fill="#f3b425"/>`)}
        </button>
        <button class="front" aria-label="File Explorer">
          ${icon(34, 32, "0 0 34 32", svg`
            <path d="M3 4H13L15 7H30V29H3Z" fill="#eecf73"/>
            <path d="M5 2H12V6H5ZM16 3H22V7H16ZM24 4H30V8H24Z" fill="#fbf3cf"/>
            <path d="M6 3H8M18 4H20M26 5H28" stroke="#68902e" stroke-width="1.600"/>
            <path d="M2 9H32V28H2Z" fill="#f7e6a1"/>
            <path d="M6 18H28V31H23V24H11V31H6Z" fill="#74bfe8" stroke="#4699cb"/>
            <path d="M8 20H26" stroke="#c8ebfa" stroke-width="2"/>`)}
        </button>
        <button aria-label="Store">
          ${icon(30, 30, "0 0 30 30", svg`
            <rect width="30" height="30" fill="#0c8a10"/>
            <path d="M4 11L24 9V25.500L6 24Z" fill="#fff"/>
            <path d="M9 11V8Q9 4.500 12 4.500T15 10M12 9Q13 5 16 5T19 9.500" stroke="#fff" stroke-width="1.600" fill="none"/>
            <path d="M8.500 14.300L13 13.700V17.400H8.500ZM14 13.500L19.500 12.800V17.400H14ZM8.500 18.400H13V22.300L8.500 21.800ZM14 18.400H19.500V23L14 22.400Z" fill="#0c8a10"/>`)}
        </button>
        <button class="open busy" aria-label="Browser">${foxIcon(34, 28)}</button>
        <button class="open" aria-label="Web viewer">
          ${icon(32, 32, "0 0 32 32", svg`
            <circle cx="16" cy="16" r="15" fill="#dfe3dd"/>
            <path d="M16 1A15 15 0 0 1 22 30Q26 20 22 9Z" fill="#3b9444"/>
            <path d="M2 12A15 15 0 0 1 26 5L20 10Q8 6 2 12Z" fill="#4f6069"/>
            <path d="M1.500 16Q10 18 14 30A15 15 0 0 1 1.500 16Z" fill="#f3f3ec"/>
            <circle cx="16" cy="13" r="7" fill="#17508a"/><circle cx="16" cy="13" r="4.500" fill="#2d86cf"/>
            <circle cx="14.500" cy="11.500" r="1.800" fill="#9ad5f7"/>
            <circle cx="16" cy="16" r="14.600" fill="none" stroke="#5f6f62" stroke-width=".8"/>`)}
        </button>
        <button class="open" aria-label="Installer">
          ${icon(32, 32, "0 0 32 32", svg`
            <path d="M11 2L21 1L26 3V22L21 24H11Z" fill="#c3cbd1"/><path d="M21 1L26 3V22L21 24Z" fill="#8e9aa3"/>
            <path d="M13 6H19M13 9H19" stroke="#9aa6af" stroke-width="1.400"/>
            <path d="M12 17L16 13L20 17" stroke="#3f4e5b" stroke-width="1.600" fill="none"/>
            <path d="M2 18H22L25 21V26H2Z" fill="#dbe3e9"/><path d="M4 25H22L20 31H6Z" fill="#9db8cc"/>
            <path d="M6 21V25M9 21V25M12 21V25M15 21V25M18 21V25" stroke="#6b7f8e"/>
            <circle cx="26" cy="24" r="2.500" fill="#3c4248"/>`)}
        </button>
      </div>
      <div class="tray">
        ${icon(9, 5, "0 0 9 5", svg`<path d="M4.500 .3L8.500 4.700H.5Z" fill="#fff"/>`)}
        ${icon(16, 16, "0 0 16 16", svg`<path d="M2 1V16" stroke="#fff" stroke-width="1.400"/><path d="M3.500 2H9V4H15L13 6.500L15 9H8V8H3.500Z" fill="#fff"/>`)}
        ${icon(17, 16, "0 0 17 16", svg`
          <rect x="5.500" y="3.500" width="10" height="8" fill="none" stroke="#fff" stroke-width="1.400"/>
          <path d="M8 14.500H14M10.500 12V14.500" stroke="#fff" stroke-width="1.400"/>
          <path d="M1.500 1.500H5.500V6H1.500ZM3.500 6V12H6" fill="#a08a5c" stroke="#fff" stroke-width="1.300"/>`)}
        ${icon(16, 16, "0 0 16 16", svg`
          <path d="M1 5H4L8 1V14L4 10.500H1Z" fill="#fff"/>
          <circle cx="11" cy="11" r="4.700" fill="#d6402b"/><path d="M9 9L13 13M13 9L9 13" stroke="#fff" stroke-width="1.500"/>`)}
        <div class="clock">8:26 PM<br />12/20/2024</div>
      </div>
    `;
  }
}

@customElement("app-root")
export class AppRoot extends LitElement {
  static styles = [
    base,
    css`
      :host {
        display: flex;
        flex-direction: column;
        height: 100vh;
        overflow: hidden;
        background: #2b2a33;
      }
      browser-chrome,
      task-bar {
        flex: none;
      }
      .page {
        position: relative;
        flex: 1;
        min-height: 0;
        color: #fbfbfe;
      }
      .settings {
        margin: 33px 33px 0 auto;
      }
      file-window {
        position: absolute;
        inset: 49px 89px 7px 135px;
      }
      .cursor {
        position: absolute;
        left: 431px;
        top: 318px;
      }
    `,
  ];

  render() {
    return html`
      <browser-chrome></browser-chrome>
      <div class="page">
        <button class="settings" aria-label="Personalize">
          ${icon(16, 16, "0 0 16 16", svg`
            <path d="M6.500 .9H9.500L10 3L11.500 3.900L13.600 3.200L15.100 5.800L13.500 7.200V8.800L15.100 10.200L13.600 12.800L11.500 12.100L10 13L9.500 15.100H6.500L6 13L4.500 12.100L2.400 12.800L.9 10.200L2.500 8.800V7.200L.9 5.800L2.400 3.200L4.500 3.900L6 3Z"
              fill="none" stroke="currentColor" stroke-width="1.300" stroke-linejoin="round"/>
            <circle cx="8" cy="8" r="2.300" fill="none" stroke="currentColor" stroke-width="1.300"/>`)}
        </button>
        <file-window></file-window>
        <svg class="cursor" width="13" height="20" viewBox="0 0 13 20" aria-hidden="true">
          <path d="M1 1V16L4.500 12.800L7 18.500L9.500 17.400L7 11.800H12Z" fill="#fff" stroke="#111" stroke-width="1" />
        </svg>
      </div>
      <task-bar></task-bar>
    `;
  }
}
